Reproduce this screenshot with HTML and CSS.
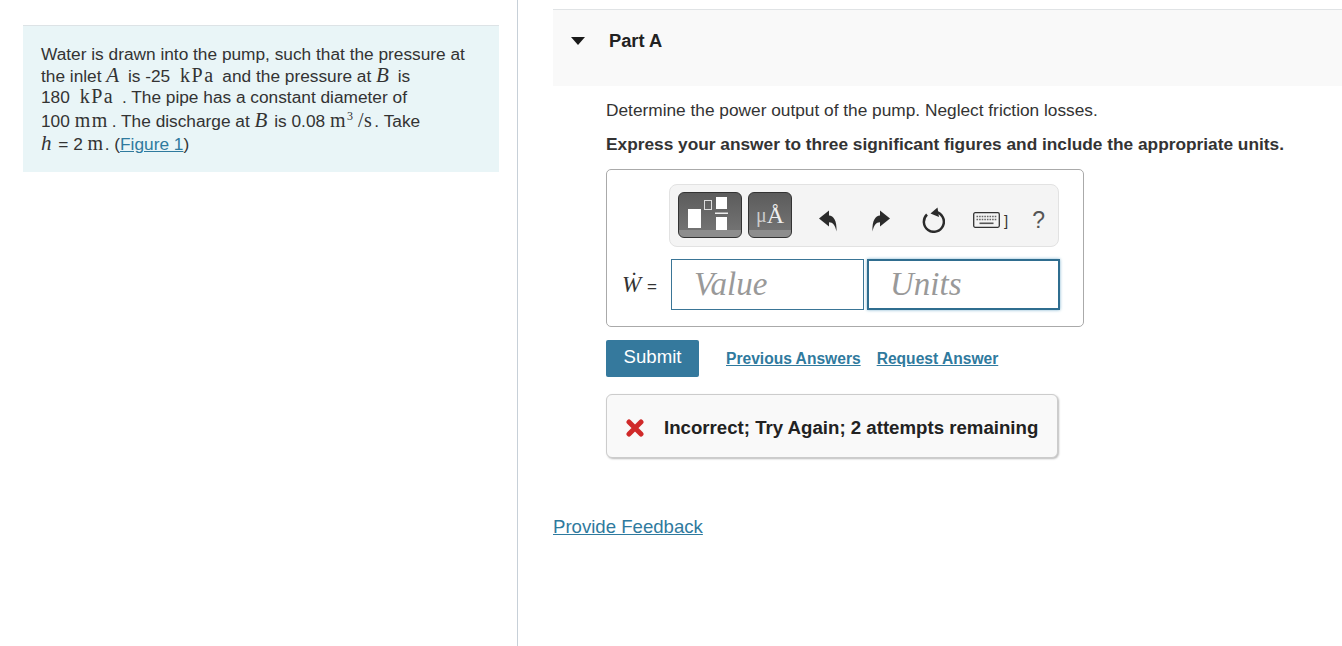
FILE: index.html
```html
<!DOCTYPE html>
<html lang="en">
<head>
  <meta charset="UTF-8">
  <title>Part A</title>
  <link rel="stylesheet" href="styles.css">
</head>
<body>
  <div class="page">
    <!-- Problem statement -->
    <aside class="left-col">
      <div class="intro">
        <span class="line">Water is drawn into the pump, such that the pressure at</span>
        <span class="line">the inlet <i class="math math-wide">A</i> is -25 <span class="unit">kPa</span> and the pressure at <i class="math math-wide">B</i> is</span>
        <span class="line">180 <span class="unit">kPa</span> . The pipe has a constant diameter of</span>
        <span class="line line-tall">100 <span class="unit unit-mm">mm</span>. The discharge at <i class="math">B</i> is 0.08 <span class="unit unit-tight">m</span><sup class="cube">3</sup><span class="unit slash">/s</span>. Take</span>
        <span class="line line-mid"><i class="math">h</i> = 2 <span class="unit unit-tight">m</span>. (<a href="#figure">Figure 1</a>)</span>
      </div>
    </aside>

    <!-- Part A -->
    <main class="right-col">
      <div class="part-header">
        <svg class="caret" width="14" height="8" viewBox="0 0 14 8"><path d="M0 0h14L7 8z" fill="#1a1a1a"/></svg>
        <h2>Part A</h2>
      </div>

      <div class="part-body">
        <p class="question">Determine the power output of the pump. Neglect friction losses.</p>
        <p class="instruction">Express your answer to three significant figures and include the appropriate units.</p>

        <div class="answer-box">
          <div class="toolbar">
            <div class="tool-btn tool-btn-wide">
              <svg width="62" height="44" viewBox="0 0 62 44">
                <rect x="9" y="16" width="13" height="19" fill="#fff"/>
                <rect x="25.500" y="7.500" width="7" height="9" fill="none" stroke="#ddd"/>
                <rect x="37" y="4" width="11" height="12" fill="#fff"/>
                <rect x="36" y="19.500" width="13" height="1.500" fill="#eee"/>
                <rect x="37" y="24" width="11" height="13" fill="#fff"/>
              </svg>
            </div>
            <div class="tool-btn tool-btn-units"><span class="mu">μ</span><span class="angstrom">Å</span></div>
            <div class="tool-icons">
              <svg class="arrow" width="20" height="24" viewBox="0 0 20 24"><path d="M1 9.500 11 1.500V6.500C15.500 7 19 11 18.500 22.500 17 16 15 13.500 11 13.300V17.500Z" fill="#2b2b2b"/></svg>
              <svg class="arrow" width="20" height="24" viewBox="0 0 20 24"><path d="M19 9.500 9 1.500V6.500C4.500 7 1 11 1.500 22.500 3 16 5 13.500 9 13.300V17.500Z" fill="#2b2b2b"/></svg>
              <svg width="24" height="26" viewBox="0 0 24 26"><path d="M6 7.500A10 10 0 1 0 15 5" fill="none" stroke="#2b2b2b" stroke-width="2.500"/><path d="M9.500 6.500 16.500 0.500 18 10Z" fill="#2b2b2b"/></svg>
              <span class="kbd-wrap">
                <svg width="27" height="16" viewBox="0 0 27 16">
                  <rect x="0.700" y="0.700" width="25.600" height="14.600" rx="1.500" fill="#f4f4f4" stroke="#333" stroke-width="1.300"/>
                  <path d="M3.500 4.500h20M3.500 7.500h20" stroke="#666" stroke-width="1.700" stroke-dasharray="1.600 1"/>
                  <path d="M6.500 11.300h14" stroke="#555" stroke-width="1.600"/>
                </svg>
                <span class="bracket">]</span>
              </span>
              <span class="help">?</span>
            </div>
          </div>

          <div class="input-row">
            <span class="answer-label"><span class="w-dot">Ẇ</span> <span class="eq">=</span></span>
            <div class="input-field">Value</div>
            <div class="input-field input-focus">Units</div>
          </div>
        </div>

        <div class="actions">
          <button class="submit">Submit</button>
          <a href="#prev" class="action-link first">Previous Answers</a>
          <a href="#request" class="action-link">Request Answer</a>
        </div>

        <div class="feedback">
          <svg width="18" height="18" viewBox="0 0 18 18"><path d="M3 3 15 15M15 3 3 15" stroke="#d02a2a" stroke-width="5" stroke-linecap="round"/></svg>
          <span>Incorrect; Try Again; 2 attempts remaining</span>
        </div>
      </div>

      <a href="#feedback" class="provide-feedback">Provide Feedback</a>
    </main>
  </div>
</body>
</html>
```

FILE: styles.css
```css
* {
  margin: 0;
  padding: 0;
  box-sizing: border-box;
}
html, body {
  height: 100%;
  overflow: hidden;
}
body {
  font-family: "Liberation Sans", Arial, sans-serif;
  font-size: 17.300px;
  color: #333;
  background: #fff;
}
a {
  color: #2f7a9e;
}

.page {
  display: flex;
  height: 646px;
}

/* Left column */
.left-col {
  width: 518px;
  flex: none;
  border-right: 1px solid #c7d0d8;
  padding: 25px 18px 0 23px;
}
.intro {
  background: #e9f5f7;
  border-top: 1px solid #dde3e6;
  height: 147px;
  padding: 17px 18px 0;
  line-height: 22px;
}
.line {
  display: block;
  white-space: nowrap;
  height: 21.500px;
}
.line-tall {
  margin-top: 2px;
}
.line-mid {
  margin-top: 1.500px;
}
.math {
  font-family: "Liberation Serif", serif;
  font-size: 21px;
  line-height: 0;
  margin-right: 2px;
}
.math-wide {
  margin-right: 4px;
}
.unit {
  font-family: "Liberation Serif", serif;
  font-size: 20px;
  line-height: 0;
  margin: 0 3px 0 5px;
  letter-spacing: 1.500px;
}
.unit-mm {
  margin: 0 3px 0 0;
}
.unit-tight {
  margin: 0;
}
.slash {
  margin: 0 2px 0 5px;
  letter-spacing: 0.500px;
}
.cube {
  font-family: "Liberation Serif", serif;
  font-size: 12px;
  line-height: 0;
}

/* Right column */
.right-col {
  flex: 1;
  padding: 9px 0 0 35px;
}
.part-header {
  display: flex;
  align-items: center;
  height: 77px;
  background: #f9f9f9;
  border-top: 1px solid #e0e3e5;
  padding: 0 0 16px 18px;
}
.part-header h2 {
  font-size: 18.300px;
  font-weight: bold;
  color: #222;
  margin-left: 24px;
  position: relative;
  top: 1px;
}
.caret {
  position: relative;
  top: 1px;
}
.part-body {
  padding: 14px 0 0 53px;
}
.question {
  line-height: 20px;
}
.instruction {
  line-height: 20px;
  font-weight: bold;
  margin-top: 14px;
}

.answer-box {
  width: 478px;
  height: 158px;
  margin-top: 15px;
  border: 1px solid #aaa;
  border-radius: 5px;
  padding: 14px 0 0 62px;
}
.toolbar {
  display: flex;
  align-items: flex-start;
  width: 390px;
  height: 63px;
  background: #f4f4f4;
  border: 1px solid #e2e2e2;
  border-radius: 8px;
  padding: 7px 0 0 8px;
}
.tool-btn {
  height: 46px;
  border: 1px solid #333;
  border-radius: 6px;
  overflow: hidden;
  background: linear-gradient(#5c5c5c 0, #727272 83%, #8d8d8d 83%, #8d8d8d 100%);
  color: #fff;
}
.tool-btn-wide {
  width: 64px;
}
.tool-btn svg {
  display: block;
}
.tool-btn-units {
  width: 44px;
  margin-left: 6px;
  display: flex;
  justify-content: center;
  align-items: flex-end;
  padding-bottom: 10px;
  font-family: "Liberation Serif", serif;
  line-height: 24px;
}
.mu {
  font-size: 20px;
  color: #ccc;
}
.angstrom {
  font-size: 24px;
  color: #eee;
}
.tool-icons {
  display: flex;
  align-items: center;
  height: 56px;
  margin-left: 26px;
  color: #333;
}
.arrow {
  margin-top: 2px;
}
.tool-icons svg:nth-child(2) {
  margin-left: 33px;
}
.tool-icons svg:nth-child(3) {
  margin-left: 30px;
}
.kbd-wrap {
  display: flex;
  align-items: center;
  margin-left: 28px;
}
.bracket {
  font-size: 15px;
  margin-left: 4px;
}
.help {
  font-size: 23px;
  margin-left: 24px;
  color: #555;
}

.input-row {
  display: flex;
  align-items: center;
  margin-top: 12px;
}
.answer-label {
  width: 49px;
  margin-left: -47px;
  flex: none;
  white-space: nowrap;
  font-family: "Liberation Serif", serif;
  font-style: italic;
  font-size: 23px;
  color: #333;
}
.eq {
  font-family: "Liberation Sans", sans-serif;
  font-style: normal;
  font-size: 17px;
}
.input-field {
  width: 193px;
  height: 51px;
  border: 1px solid #3a7596;
  padding-left: 22px;
  font-family: "Liberation Serif", serif;
  font-style: italic;
  font-size: 33px;
  line-height: 49px;
  color: #999;
}
.input-focus {
  margin-left: 3px;
  border-width: 2px;
  border-color: #2f6d8f;
  padding-left: 21px;
  line-height: 47px;
  box-shadow: 0 0 3px #7fb4cf;
}

.actions {
  display: flex;
  align-items: center;
  margin-top: 13px;
}
.submit {
  width: 93px;
  height: 37px;
  background: #35799d;
  color: #fff;
  border: none;
  border-radius: 2px;
  padding-bottom: 4px;
  font-family: "Liberation Sans", sans-serif;
  font-size: 18.600px;
}
.action-link {
  font-size: 15.600px;
  font-weight: bold;
  margin-left: 16px;
}
.action-link.first {
  margin-left: 27px;
}

.feedback {
  display: flex;
  align-items: center;
  width: 452px;
  height: 64px;
  margin-top: 17px;
  background: #f9f9f9;
  border: 1px solid #ccc;
  border-radius: 6px;
  box-shadow: 1px 1px 2px #bbb;
  padding: 4px 0 0 19px;
  font-size: 18.650px;
  font-weight: bold;
  color: #222;
}
.feedback span {
  margin-left: 20px;
  white-space: nowrap;
}

.provide-feedback {
  display: inline-block;
  margin-top: 58px;
  font-size: 18.600px;
}
```
